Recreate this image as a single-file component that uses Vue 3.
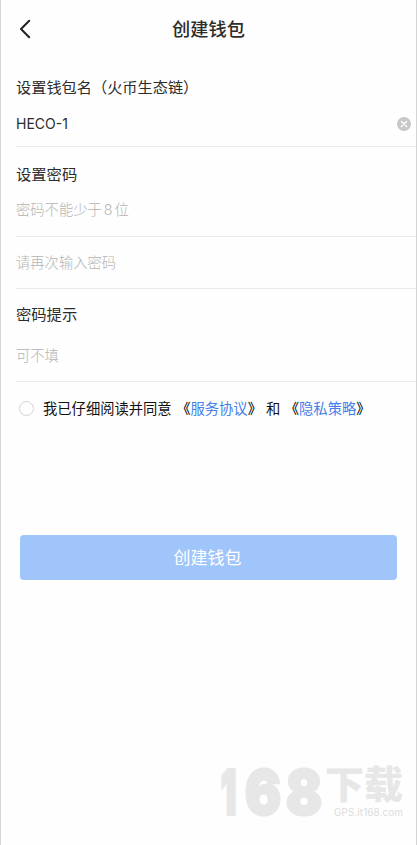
<script setup>
import { ref } from 'vue'

const walletName = ref('HECO-1')
const password = ref('')
const confirmPassword = ref('')
const hint = ref('')
const agreed = ref(false)
</script>

<template>
  <main class="screen">
    <header class="nav">
      <svg class="back" viewBox="0 0 12 20" aria-label="返回">
        <path d="M10.2 1.8 2 10l8.2 8.2" />
      </svg>
      <h1 class="title">创建钱包</h1>
    </header>

    <form class="form" @submit.prevent>
      <section class="group name">
        <h2 class="label">设置钱包名（火币生态链）</h2>
        <div class="field">
          <input v-model="walletName" class="input" type="text" />
          <svg class="clear" viewBox="0 0 14 14" @click="walletName = ''">
            <circle cx="7" cy="7" r="7" />
            <path d="m4.4 4.4 5.2 5.2m0-5.2-5.2 5.2" />
          </svg>
        </div>
      </section>

      <section class="group secret">
        <h2 class="label">设置密码</h2>
        <div class="field first">
          <input v-model="password" class="input" type="password" placeholder="密码不能少于 8 位" />
        </div>
        <div class="field second">
          <input v-model="confirmPassword" class="input" type="password" placeholder="请再次输入密码" />
        </div>
      </section>

      <section class="group hint">
        <h2 class="label">密码提示</h2>
        <div class="field">
          <input v-model="hint" class="input" type="text" placeholder="可不填" />
        </div>
      </section>

      <div class="agree">
        <span class="radio" :class="{ on: agreed }" @click="agreed = !agreed"></span>
        <span class="consent">我已仔细阅读并同意</span>
        <span class="doc">《<a>服务协议</a>》</span>
        <span class="and">和</span>
        <span class="doc">《<a>隐私策略</a>》</span>
      </div>

      <button class="submit" type="submit">创建钱包</button>
    </form>

    <footer class="mark">
      <svg class="logo" viewBox="0 0 190 60">
        <g class="digits">
          <text class="one" x="2" y="51" textLength="15" lengthAdjust="spacingAndGlyphs">1</text>
          <text x="26" y="51" textLength="36" lengthAdjust="spacingAndGlyphs">6</text>
          <text x="67" y="51" textLength="36" lengthAdjust="spacingAndGlyphs">8</text>
        </g>
        <text class="word" x="106" y="34.5" textLength="78" lengthAdjust="spacingAndGlyphs">下载</text>
        <text class="site" x="115" y="53" textLength="69">GPS.it168.com</text>
      </svg>
    </footer>
  </main>
</template>

<style>
body {
  margin: 0;
  background: #fff;
}
</style>

<style scoped>
.screen {
  box-sizing: border-box;
  display: flex;
  flex-direction: column;
  width: 417px;
  height: 845px;
  overflow: hidden;
  border-left: 1px solid #d4d4d4;
  border-right: 1px solid #d4d4d4;
  background: #fefefe;
  color: #2c2c2c;
  font-family: Inter, "Noto Sans CJK SC", sans-serif;
}

.nav {
  display: grid;
  grid-template-columns: 60px 1fr 60px;
  align-items: center;
  height: 58px;
}

.back {
  width: 12px;
  height: 20px;
  margin-left: 18px;
  fill: none;
  stroke: #222;
  stroke-width: 2;
  stroke-linecap: round;
  stroke-linejoin: round;
}

.title {
  margin: 0;
  font-size: 18.2px;
  font-weight: 500;
  line-height: 28px;
  text-align: center;
}

.form {
  display: flex;
  flex-direction: column;
}

.group {
  display: flex;
  flex-direction: column;
  padding-left: 15px;
}

.label {
  margin: 0;
  font-size: 15.3px;
  font-weight: 400;
  line-height: 24px;
}

.name .label {
  font-size: 15.2px;
}

.name {
  padding-top: 18px;
}

.field {
  box-sizing: border-box;
  display: flex;
  align-items: center;
  border-bottom: 1px solid #ebebeb;
}

.name .field {
  height: 47px;
  padding: 2px 5px 0 0;
}

.secret {
  padding-top: 16px;
}

.first {
  height: 50px;
  padding-bottom: 3px;
}

.second {
  height: 52px;
}

.hint {
  padding-top: 14px;
}

.hint .field {
  height: 55px;
  padding-top: 3px;
}

.input {
  flex: 1;
  min-width: 0;
  height: 24px;
  padding: 0;
  border: 0;
  outline: 0;
  background: none;
  color: #2c2c2c;
  font: 400 14.3px/24px Inter, "Noto Sans CJK SC", sans-serif;
}

.name .input {
  font-size: 14px;
}

.input::placeholder {
  color: #b4b4b4;
  font-weight: 300;
  word-spacing: -2px;
  opacity: 1;
}

.clear {
  width: 14px;
  height: 14px;
  fill: #c8c8c8;
}

.clear path {
  stroke: #fff;
  stroke-width: 1.4;
  stroke-linecap: round;
}

.agree {
  display: flex;
  align-items: center;
  height: 24px;
  margin-top: 15px;
  padding-left: 18px;
  color: #111;
  font-size: 14.3px;
  line-height: 24px;
  white-space: nowrap;
}

.radio {
  box-sizing: border-box;
  width: 15px;
  height: 15px;
  margin: 0 9px 1px 0;
  border: 1px solid #d2d2d2;
  border-radius: 50%;
}

.radio.on {
  border: 4px solid #3f7df0;
}

.doc {
  margin-left: 4.5px;
  font-weight: 500;
}

.doc a {
  color: #4580ea;
  font-weight: 400;
}

.and {
  margin: 0 0 0 4px;
}

.submit {
  height: 45px;
  margin: 114px 19px 0;
  padding: 0 2px 1px 0;
  border: 0;
  border-radius: 4px;
  background: #9fc5fb;
  color: #fff;
  font: 400 17px/44px "Noto Sans CJK SC", sans-serif;
}

.mark {
  display: flex;
  justify-content: flex-end;
  margin-top: auto;
  padding: 0 7px 22px 0;
}

.logo {
  width: 190px;
  height: 60px;
  overflow: visible;
  fill: #e7e7e7;
}

.digits {
  font: 900 60px Inter, sans-serif;
  stroke: #e7e7e7;
  stroke-width: 3;
  stroke-linejoin: miter;
}

.one {
  stroke-width: 4;
}

.word {
  font: 900 38px "Noto Sans CJK SC", sans-serif;
}

.site {
  fill: #dcdcdc;
  font: 400 10px Inter, sans-serif;
}
</style>
